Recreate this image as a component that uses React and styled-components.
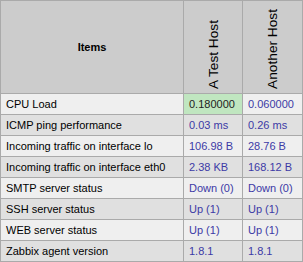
import styled, { createGlobalStyle } from "styled-components";

const Global = createGlobalStyle`
  body {
    margin: 0;
    background: #ffffff;
    font-family: "Liberation Sans", Arial, sans-serif;
  }
`;

const Table = styled.table`
  border-collapse: collapse;
  width: 303px;
  font-size: 11px;
  color: #000;
`;

const HeadCell = styled.th`
  background: #cccccc;
  border: 1px solid #aaaaaa;
  height: 92px;
  padding: 0;
  font-size: 11px;
  font-weight: bold;
  width: ${(p) => p.$width}px;
  vertical-align: ${(p) => (p.$vertical ? "bottom" : "middle")};
`;

const VerticalText = styled.div`
  writing-mode: vertical-rl;
  transform: rotate(180deg);
  font-size: 13.7px;
  font-weight: normal;
  margin: 0 auto 4px;
  white-space: nowrap;
`;

const Row = styled.tr`
  background: ${(p) => (p.$odd ? "#efefef" : "#e0e0e0")};
`;

const Cell = styled.td`
  border: 1px solid #aaaaaa;
  height: 21px;
  padding: 0 5px;
  white-space: nowrap;
  box-sizing: border-box;
  color: ${(p) => (p.$value ? "#3c3aa6" : "#000")};
  background: ${(p) => (p.$ok ? "#c0e6c0" : "transparent")};
  ${(p) => p.$ok && "color: #222;"}
`;

const rows = [
  ["CPU Load", "0.180000", "0.060000", true],
  ["ICMP ping performance", "0.03 ms", "0.26 ms"],
  ["Incoming traffic on interface lo", "106.98 B", "28.76 B"],
  ["Incoming traffic on interface eth0", "2.38 KB", "168.12 B"],
  ["SMTP server status", "Down (0)", "Down (0)"],
  ["SSH server status", "Up (1)", "Up (1)"],
  ["WEB server status", "Up (1)", "Up (1)"],
  ["Zabbix agent version", "1.8.1", "1.8.1"],
];

export default function App() {
  return (
    <>
      <Global />
      <Table>
        <thead>
          <tr>
            <HeadCell $width={182}>Items</HeadCell>
            <HeadCell $width={58} $vertical>
              <VerticalText>A Test Host</VerticalText>
            </HeadCell>
            <HeadCell $width={59} $vertical>
              <VerticalText>Another Host</VerticalText>
            </HeadCell>
          </tr>
        </thead>
        <tbody>
          {rows.map(([name, a, b, hot], i) => (
            <Row key={name} $odd={i % 2 === 0}>
              <Cell>{name}</Cell>
              <Cell $value $ok={hot}>
                {a}
              </Cell>
              <Cell $value>{b}</Cell>
            </Row>
          ))}
        </tbody>
      </Table>
    </>
  );
}
